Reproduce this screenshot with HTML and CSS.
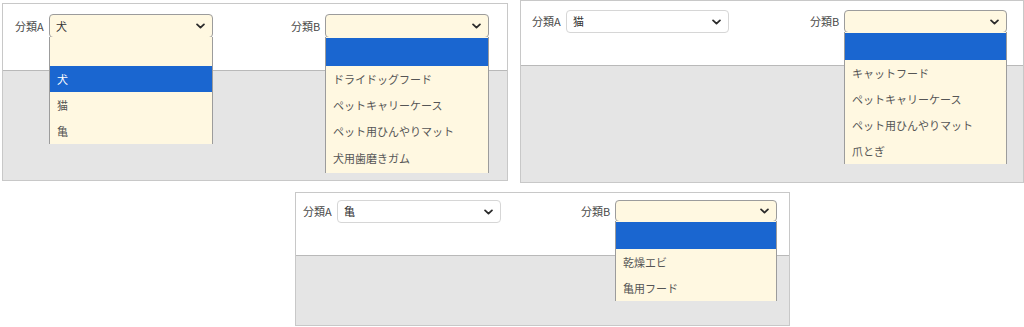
FILE: index.html
```html
<!DOCTYPE html>
<html lang="ja">
<head>
  <meta charset="UTF-8" />
  <meta name="viewport" content="width=device-width, initial-scale=1" />
  <title>分類選択</title>
  <link rel="stylesheet" href="styles.css">
</head>
<body>
  <div class="shots">
    <div class="row row-top">

      <!-- 犬 -->
      <section class="shot shot-dog">
        <div class="form">
          <div class="field">
            <span class="label">分類A</span>
            <div class="select is-open">
              <span class="value">犬</span>
              <svg class="chevron" viewBox="0 0 10 6" aria-hidden="true"><path d="M1.2 1.2 L5 4.8 L8.8 1.2" /></svg>
              <ul class="options">
                <li></li>
                <li class="selected">犬</li>
                <li>猫</li>
                <li>亀</li>
              </ul>
            </div>
          </div>
          <div class="field field-b">
            <span class="label">分類B</span>
            <div class="select is-open">
              <span class="value"></span>
              <svg class="chevron" viewBox="0 0 10 6" aria-hidden="true"><path d="M1.2 1.2 L5 4.8 L8.8 1.2" /></svg>
              <ul class="options">
                <li class="selected"></li>
                <li>ドライドッグフード</li>
                <li>ペットキャリーケース</li>
                <li>ペット用ひんやりマット</li>
                <li>犬用歯磨きガム</li>
              </ul>
            </div>
          </div>
        </div>
        <div class="body"></div>
      </section>

      <!-- 猫 -->
      <section class="shot shot-cat">
        <div class="form">
          <div class="field">
            <span class="label">分類A</span>
            <div class="select">
              <span class="value">猫</span>
              <svg class="chevron" viewBox="0 0 10 6" aria-hidden="true"><path d="M1.2 1.2 L5 4.8 L8.8 1.2" /></svg>
            </div>
          </div>
          <div class="field field-b">
            <span class="label">分類B</span>
            <div class="select is-open">
              <span class="value"></span>
              <svg class="chevron" viewBox="0 0 10 6" aria-hidden="true"><path d="M1.2 1.2 L5 4.8 L8.8 1.2" /></svg>
              <ul class="options">
                <li class="selected"></li>
                <li>キャットフード</li>
                <li>ペットキャリーケース</li>
                <li>ペット用ひんやりマット</li>
                <li>爪とぎ</li>
              </ul>
            </div>
          </div>
        </div>
        <div class="body"></div>
      </section>
    </div>

    <div class="row row-bottom">
      <!-- 亀 -->
      <section class="shot shot-turtle">
        <div class="form">
          <div class="field">
            <span class="label">分類A</span>
            <div class="select">
              <span class="value">亀</span>
              <svg class="chevron" viewBox="0 0 10 6" aria-hidden="true"><path d="M1.2 1.2 L5 4.8 L8.8 1.2" /></svg>
            </div>
          </div>
          <div class="field field-b">
            <span class="label">分類B</span>
            <div class="select is-open">
              <span class="value"></span>
              <svg class="chevron" viewBox="0 0 10 6" aria-hidden="true"><path d="M1.2 1.2 L5 4.8 L8.8 1.2" /></svg>
              <ul class="options">
                <li class="selected"></li>
                <li>乾燥エビ</li>
                <li>亀用フード</li>
              </ul>
            </div>
          </div>
        </div>
        <div class="body"></div>
      </section>
    </div>
  </div>
</body>
</html>
```

FILE: styles.css
```css
:root {
  --font-family: 'Noto Sans CJK JP', 'Noto Sans', sans-serif;
  --color-text: #333333;
  --color-label: #4a4a4a;
  --color-option: #555555;
  --color-cream: #fff8e1;
  --color-blue: #1a66d0;
  --color-body: #e5e5e5;
  --color-frame: #c8c8c8;
  --color-rule: #b9b9b9;
}

*, *::before, *::after {
  box-sizing: border-box;
}

body {
  margin: 0;
  background: #ffffff;
  font-family: var(--font-family);
  font-size: 11px;
  line-height: 1;
  color: var(--color-text);
  width: 1024px;
  height: 327px;
  overflow: hidden;
}

/* Layout of the three shots */
.row {
  display: flex;
  align-items: flex-start;
}

.row-top {
  padding-left: 2px;
}

.row-bottom {
  padding-left: 295px;
  margin-top: 9px;
}

/* One screenshot */
.shot {
  border: 1px solid var(--color-frame);
  display: flex;
  flex-direction: column;
  background: #ffffff;
}

.shot-dog {
  width: 506px;
  height: 178px;
  margin-top: 3px;
}

.shot-cat {
  width: 504px;
  height: 183px;
  margin-left: 12px;
}

.shot-turtle {
  width: 495px;
  height: 134px;
}

.form {
  display: flex;
  align-items: flex-start;
  border-bottom: 1px solid var(--color-rule);
  position: relative;
  z-index: 2;
}

.shot-dog .form {
  height: 67px;
  padding: 10px 0 0 12px;
}

.shot-cat .form {
  height: 65px;
  padding: 9px 0 0 11px;
}

.shot-turtle .form {
  height: 63px;
  padding: 7px 0 0 7px;
}

.body {
  flex-grow: 1;
  background: var(--color-body);
}

/* Field */
.field {
  display: flex;
  align-items: center;
  gap: 6px;
}

.shot-dog .field-b {
  margin-left: 78px;
}

.shot-cat .field-b {
  margin-left: 81px;
}

.shot-turtle .field-b {
  margin-left: 80px;
}

.label {
  width: 28px;
  color: var(--color-label);
  white-space: nowrap;
}

/* Select box */
.select {
  position: relative;
  width: 164px;
  height: 23px;
  border: 1px solid #d6d6d6;
  border-radius: 4px;
  background: #ffffff;
  display: flex;
  align-items: center;
  padding: 0 7px 0 6px;
}

.shot-dog .select {
  height: 24px;
}

.shot-cat .select {
  width: 163px;
}

.shot-turtle .select {
  width: 164px;
}

.shot-turtle .field-b .select {
  width: 162px;
  height: 22px;
}

.select.is-open {
  background: var(--color-cream);
  border-color: #9c9c9c;
}

.value {
  flex-grow: 1;
  color: var(--color-text);
}

.chevron {
  width: 9px;
  height: 6px;
  fill: none;
  stroke: #2b2b2b;
  stroke-width: 2;
  stroke-linecap: round;
  stroke-linejoin: round;
}

/* Open list */
.options {
  position: absolute;
  top: 100%;
  left: -1px;
  right: -1px;
  margin: 0;
  padding: 1px 0 0 0;
  list-style: none;
  background: var(--color-cream);
  border-left: 1px solid #9c9c9c;
  border-right: 1px solid #9c9c9c;
}

.options li {
  height: 26px;
  padding-left: 7px;
  display: flex;
  align-items: center;
  color: var(--color-option);
  white-space: nowrap;
}

.options li:first-child {
  height: 27px;
}

.shot-dog .options li:first-child {
  height: 28px;
}

.shot-dog .field-b .options li:last-child {
  height: 29px;
}

.options li.selected {
  background: var(--color-blue);
  color: #ffffff;
}
```
